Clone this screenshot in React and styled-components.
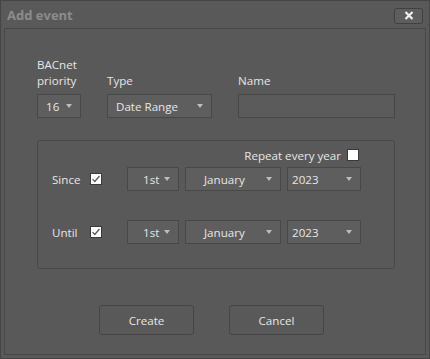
import React from 'react'
import styled, { createGlobalStyle } from 'styled-components'

const Global = createGlobalStyle`
  html, body { margin: 0; padding: 0; background: #585858; }
  body { font-family: "Open Sans", "Noto Sans", sans-serif; font-size: 11.6px; color: #e6e6e6; }
`

const Dialog = styled.div`
  box-sizing: border-box;
  width: 430px;
  height: 359px;
  background: #595959;
  border: 1px solid #454545;
  padding: 0 3px 3px 3px;
  display: flex;
  flex-direction: column;
`

const TitleBar = styled.div`
  height: 27px;
  display: flex;
  align-items: center;
  justify-content: space-between;
  padding: 0 3px 0 3px;
`

const Title = styled.div`
  font-weight: bold;
  font-size: 13px;
  color: #8c8c8c;
`

const CloseButton = styled.button`
  width: 29px;
  height: 16px;
  padding: 0;
  margin-top: 2px;
  background: #5e5e5e;
  border: 1px solid #404040;
  border-radius: 3px;
  display: flex;
  align-items: center;
  justify-content: center;
`

const Body = styled.div`
  flex: 1;
  border: 1px solid #484848;
  padding: 28px 31px 0 32px;
  display: flex;
  flex-direction: column;
`

const TopRow = styled.div`
  display: flex;
  align-items: flex-end;
`

const Field = styled.div`
  display: flex;
  flex-direction: column;
  margin-left: ${p => p.$ml || 0}px;
`

const Label = styled.div`
  line-height: 16px;
  margin-bottom: 5px;
`

const SelectBox = styled.div`
  box-sizing: border-box;
  width: ${p => p.$w}px;
  height: 24px;
  background: #5e5e5e;
  border: 1px solid #484848;
  display: flex;
  align-items: center;
  justify-content: space-between;
  padding: 0 6px 0 ${p => p.$pl || 8}px;
`

const Arrow = styled.span`
  width: 0;
  height: 0;
  border-left: 3.5px solid transparent;
  border-right: 3.5px solid transparent;
  border-top: 4px solid #bdbdbd;
  margin-right: 2px;
`

const TextInput = styled.div`
  box-sizing: border-box;
  width: 157px;
  height: 24px;
  background: #5b5b5b;
  border: 1px solid #474747;
`

const Group = styled.div`
  margin-top: 22px;
  box-sizing: border-box;
  width: 358px;
  height: 129px;
  border: 1px solid #484848;
  border-radius: 3px;
  padding: 6px 0 0 14px;
  display: flex;
  flex-direction: column;
`

const RepeatRow = styled.div`
  display: flex;
  justify-content: flex-end;
  align-items: center;
  gap: 6px;
  padding-right: 35px;
  height: 16px;
`

const CheckBox = styled.div`
  box-sizing: border-box;
  width: 12px;
  height: 12px;
  background: #fff;
  border: 1px solid #3a3a3a;
  display: flex;
  align-items: center;
  justify-content: center;
`

const DateRow = styled.div`
  display: flex;
  align-items: center;
  margin-top: ${p => p.$mt}px;
  height: 24px;
`

const RowLabel = styled.div`
  width: 38px;
`

const Selects = styled.div`
  display: flex;
  gap: 6px;
  margin-left: 25px;
`

const Footer = styled.div`
  display: flex;
  gap: 35px;
  margin-top: 36px;
  padding-left: 62px;
`

const Button = styled.button`
  box-sizing: border-box;
  width: 95px;
  height: 30px;
  background: #595959;
  border: 1px solid #454545;
  border-radius: 3px;
  color: #e6e6e6;
  font-family: inherit;
  font-size: 11.6px;
`

const Check = () => (
  <svg width="10" height="10" viewBox="0 0 10 10">
    <path d="M1.5 5.2 L3.8 7.5 L8.5 2" fill="none" stroke="#555" strokeWidth="1.2" />
  </svg>
)

const Select = ({ w, value, pl }) => (
  <SelectBox $w={w} $pl={pl}>
    <span>{value}</span>
    <Arrow />
  </SelectBox>
)

const DateLine = ({ label, mt }) => (
  <DateRow $mt={mt}>
    <RowLabel>{label}</RowLabel>
    <CheckBox><Check /></CheckBox>
    <Selects>
      <Select w={52} value="1st" pl={15} />
      <Select w={96} value="January" pl={18} />
      <Select w={74} value="2023" pl={4} />
    </Selects>
  </DateRow>
)

export default function App() {
  return (
    <>
      <Global />
      <Dialog>
        <TitleBar>
          <Title>Add event</Title>
          <CloseButton>
            <svg width="10" height="9" viewBox="0 0 10 9">
              <path d="M1.5 1 L8.5 8 M8.5 1 L1.5 8" stroke="#f0f0f0" strokeWidth="2.2" />
            </svg>
          </CloseButton>
        </TitleBar>
        <Body>
          <TopRow>
            <Field>
              <Label>BACnet<br />priority</Label>
              <Select w={44} value="16" />
            </Field>
            <Field $ml={26}>
              <Label>Type</Label>
              <Select w={105} value="Date Range" />
            </Field>
            <Field $ml={26}>
              <Label>Name</Label>
              <TextInput />
            </Field>
          </TopRow>
          <Group>
            <RepeatRow>
              <span>Repeat every year</span>
              <CheckBox />
            </RepeatRow>
            <DateLine label="Since" mt={4} />
            <DateLine label="Until" mt={29} />
          </Group>
          <Footer>
            <Button>Create</Button>
            <Button>Cancel</Button>
          </Footer>
        </Body>
      </Dialog>
    </>
  )
}
